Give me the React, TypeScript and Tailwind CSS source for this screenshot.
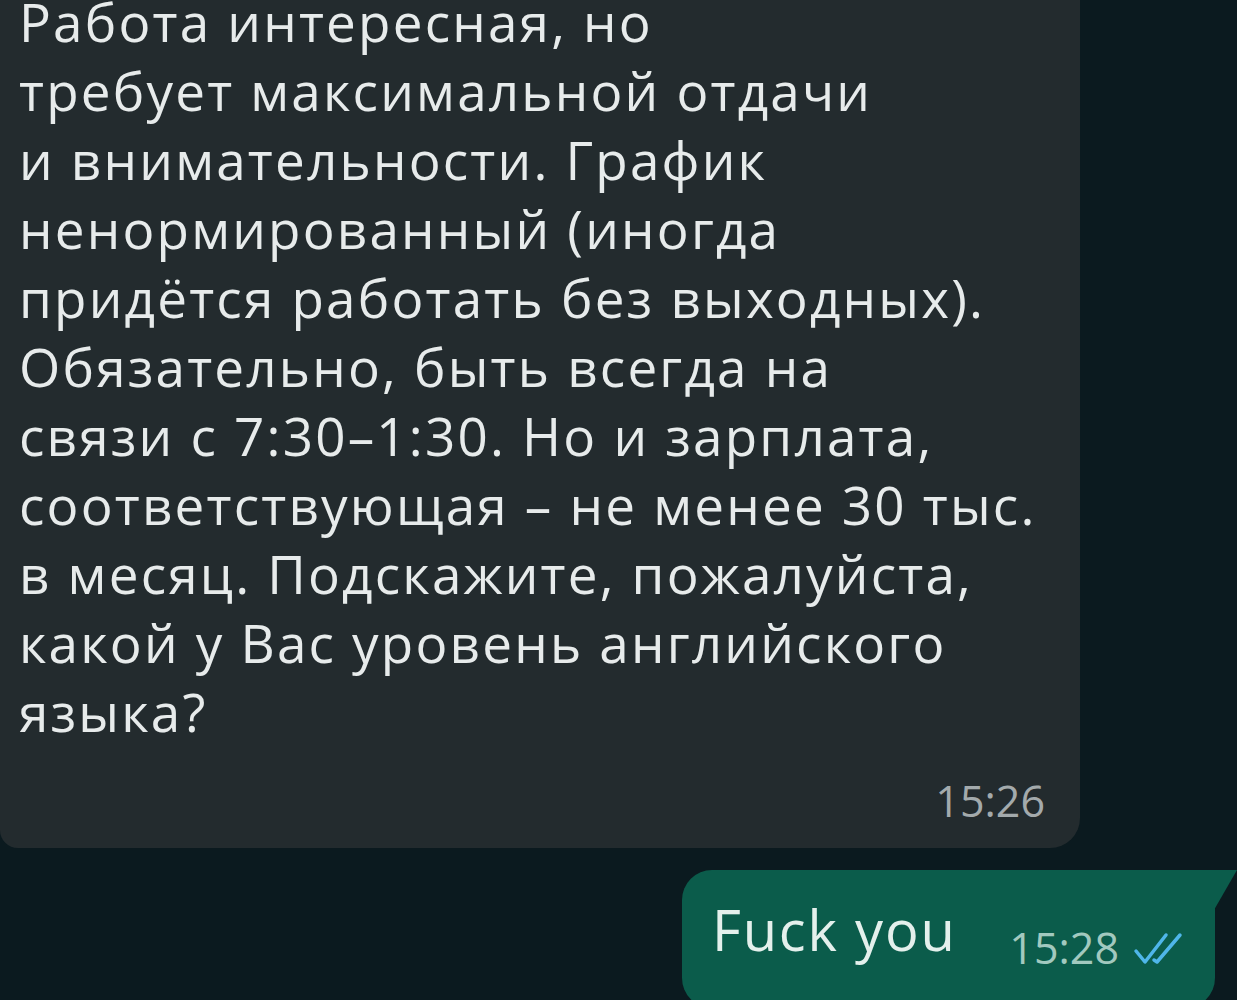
const lines = [
  'Работа интересная, но',
  'требует максимальной отдачи',
  'и внимательности. График',
  'ненормированный (иногда',
  'придётся работать без выходных).',
  'Обязательно, быть всегда на',
  'связи с 7:30–1:30. Но и зарплата,',
  'соответствующая – не менее 30 тыс.',
  'в месяц. Подскажите, пожалуйста,',
  'какой у Вас уровень английского',
  'языка?',
];

function DoubleCheck() {
  return (
    <svg width="55" height="36" viewBox="0 0 55 36" fill="none" className="shrink-0">
      <path d="M3 21 L12 32 L33 5" stroke="#4fb6ea" strokeWidth="3.5" strokeLinecap="round" strokeLinejoin="round" />
      <path d="M21 30 L24 32 L47 5" stroke="#4fb6ea" strokeWidth="3.5" strokeLinecap="round" strokeLinejoin="round" />
    </svg>
  );
}

export default function App() {
  return (
    <div className="h-[1000px] w-full overflow-hidden bg-[#0b1a1f] font-['Open_Sans','Noto_Sans',sans-serif]">
      {/* incoming message */}
      <div className="-mt-[13px] w-[1080px] rounded-br-[30px] rounded-bl-[18px] bg-[#232b2e] pl-[19px] pr-[35px] pb-[22px]">
        <div className="text-[53px] leading-[69px] text-[#e7ebeb] tracking-[2.2px]">
          {lines.map((l) => (
            <div key={l} className="whitespace-nowrap">{l}</div>
          ))}
        </div>
        <div className="mt-[30px] flex justify-end text-[43px] leading-[50px] text-[#a3aaac]">15:26</div>
      </div>

      {/* outgoing message */}
      <div className="relative mt-[22px] ml-auto mr-[22px] flex w-[533px] items-start rounded-[30px] rounded-tr-none bg-[#0b5c4b] pl-[30px] pr-[27px] pt-[26px] pb-[35px]">
        <svg className="absolute -right-[22px] top-0" width="23" height="40" viewBox="0 0 23 40">
          <path d="M0 0 H23 L0 40 Z" fill="#0b5c4b" />
        </svg>
        <span className="text-[56px] leading-[66px] tracking-[1.8px] text-[#e4f0ec]">Fuck you</span>
        <div className="ml-auto mt-[27px] flex items-center gap-[14px]">
          <span className="text-[43px] leading-[50px] text-[#a2c9bf]">15:28</span>
          <DoubleCheck />
        </div>
      </div>
    </div>
  );
}
